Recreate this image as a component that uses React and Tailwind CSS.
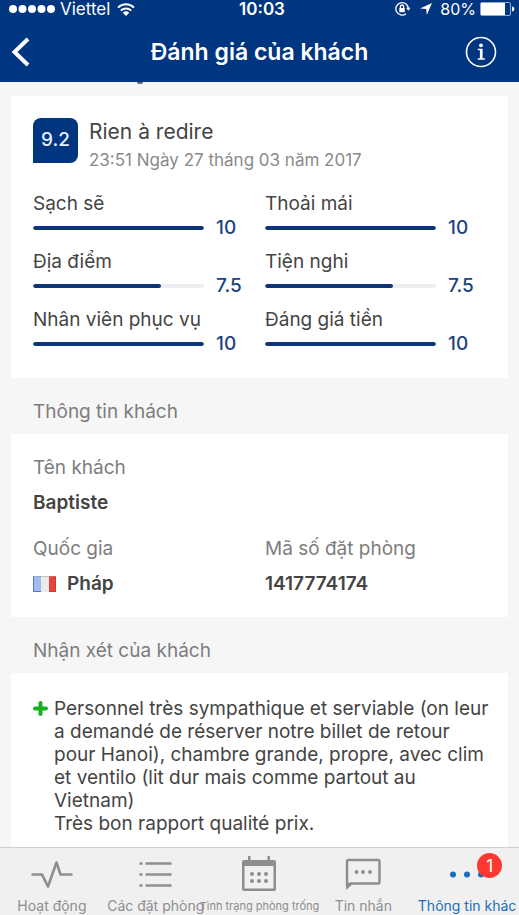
import React from "react";

const scores = [
  { label: "Sạch sẽ", value: 10 },
  { label: "Thoải mái", value: 10 },
  { label: "Địa điểm", value: 7.5 },
  { label: "Tiện nghi", value: 7.5 },
  { label: "Nhân viên phục vụ", value: 10 },
  { label: "Đáng giá tiền", value: 10 },
];

function StatusBar() {
  return (
    <div className="flex h-[18px] items-center justify-between pl-[9px] pr-1 text-[17px] leading-[18px]">
      <div className="flex flex-1 items-center gap-[5px]">
        <svg width="46" height="10" viewBox="0 0 46 10" fill="currentColor" aria-hidden="true">
          <circle cx="4" cy="5" r="4" />
          <circle cx="13.5" cy="5" r="4" />
          <circle cx="23" cy="5" r="4" />
          <circle cx="32.500" cy="5" r="4" />
          <circle cx="42" cy="5" r="4" />
        </svg>
        <span>Viettel</span>
        <svg width="18" height="13" viewBox="0 0 18 13" fill="none" stroke="currentColor" strokeWidth="2" className="ml-0.5" aria-hidden="true">
          <path d="M1 4.600A11.500 11.500 0 0 1 17 4.600" />
          <path d="M3.800 7.600A7.400 7.400 0 0 1 14.200 7.600" />
          <path d="M9 13L5.800 9.700A4.500 4.500 0 0 1 12.200 9.700Z" fill="currentColor" stroke="none" />
        </svg>
      </div>
      <span className="font-semibold">10:03</span>
      <div className="flex flex-1 items-center justify-end">
        <svg width="16" height="16" viewBox="0 0 16 16" fill="none" stroke="currentColor" strokeWidth="1.300" aria-hidden="true">
          <path d="M13.300 8A6.200 6.200 0 1 0 11 12.700" />
          <path d="M11 6.800h4.600l-2.300 3z" fill="currentColor" stroke="none" />
          <rect x="4.300" y="7" width="5.400" height="4.200" fill="currentColor" stroke="none" />
          <path d="M5.400 7V5.600a1.600 1.600 0 0 1 3.200 0V7" />
        </svg>
        <svg width="12" height="12" viewBox="0 0 12 12" fill="currentColor" className="ml-[9px] mr-2" aria-hidden="true">
          <path d="M12 0L6.800 12L6.200 6L0 5.600Z" />
        </svg>
        <span className="text-base leading-[18px]">80%</span>
        <svg width="35" height="14" viewBox="0 0 35 14" className="ml-1" aria-hidden="true">
          <rect x="0.500" y="0.500" width="30" height="13" rx="1.500" fill="none" stroke="#8fa8d0" />
          <rect x="1" y="1" width="24" height="12" fill="currentColor" />
          <path d="M32 4.500a2.500 2.500 0 0 1 0 5z" fill="currentColor" />
        </svg>
      </div>
    </div>
  );
}

function Header() {
  return (
    <header className="h-[82px] shrink-0 bg-[#003580] text-white">
      <StatusBar />
      <div className="flex h-16 items-center justify-between px-[11px] pt-1">
        <button type="button" aria-label="Quay lại" className="flex h-12 w-12 items-center">
          <svg width="20" height="30" viewBox="0 0 20 30" fill="none" stroke="currentColor" strokeWidth="4">
            <path d="M17 2L3.500 15L17 28" />
          </svg>
        </button>
        <h1 className="text-[23px] font-semibold leading-7">Đánh giá của khách</h1>
        <button type="button" aria-label="Thông tin" className="flex h-12 w-12 items-center justify-end pr-[11px]">
          <svg width="32" height="32" viewBox="0 0 32 32" fill="none" stroke="currentColor" className="shrink-0">
            <circle cx="16" cy="16" r="14.500" strokeWidth="1.600" />
            <circle cx="16" cy="9.300" r="1.900" fill="currentColor" stroke="none" />
            <path d="M12.800 13.500H16.500V23M12.800 23H19.800" strokeWidth="1.400" />
            <path d="M16.200 13V23" strokeWidth="2.600" />
          </svg>
        </button>
      </div>
    </header>
  );
}

function Score({ label, value }) {
  return (
    <div>
      <div className="text-[19px] leading-6 text-[#444]">{label}</div>
      <div className="flex h-6 items-center gap-3">
        <div role="meter" aria-label={label} aria-valuenow={value} aria-valuemin={0} aria-valuemax={10} className="h-1 flex-1 overflow-hidden rounded-full bg-[#ebedf0]">
          <div className="h-full rounded-full bg-[#0c3578]" style={{ width: `${value * 10}%` }} />
        </div>
        <span className="w-[49px] text-[19px] font-medium leading-6 text-[#1d4384]">{value}</span>
      </div>
    </div>
  );
}

function SectionTitle({ children }) {
  return <h2 className="flex h-14 items-center px-[22px] pt-3 text-[19px] leading-6 text-[#7d7d7d]">{children}</h2>;
}

function Flag() {
  return (
    <svg width="23" height="16" viewBox="0 0 23 16" aria-hidden="true">
      <rect width="8" height="16" fill="#a3baf0" />
      <rect x="8" width="8" height="16" fill="#ececec" />
      <rect x="16" width="7" height="16" fill="#ee4238" />
      <path d="M0.500 0V15.500H8" fill="none" stroke="#5275cf" />
      <path d="M16 15.500H22.500V0" fill="none" stroke="#cb3939" />
      <path d="M0 0.500H23" stroke="#999999" strokeOpacity="0.500" />
    </svg>
  );
}

function PulseIcon() {
  return (
    <svg width="42" height="28" viewBox="0 0 42 28" fill="none" stroke="currentColor" strokeWidth="2.600" strokeLinejoin="round">
      <path d="M0.500 14.500H11L17 26.500L25.500 2.500L29.500 14.500H41.500" />
    </svg>
  );
}

function ListIcon() {
  return (
    <svg width="33" height="28" viewBox="0 0 33 28" fill="none" stroke="currentColor" strokeWidth="2.600">
      <path d="M0.500 3.500h3M6.500 3.500h26M0.500 14.500h3M6.500 14.500h26M0.500 25.500h3M6.500 25.500h26" />
    </svg>
  );
}

function CalendarIcon() {
  return (
    <svg width="36" height="36" viewBox="0 0 36 36" fill="currentColor">
      <path d="M7 0h2.500v6H7zM26.500 0H29v6h-2.500z" />
      <path fillRule="evenodd" d="M3 4H33Q35 4 35 6V33Q35 35 33 35H3Q1 35 1 33V6Q1 4 3 4ZM3.500 10V32.500H32.500V10Z" />
      <circle cx="11" cy="18" r="2" />
      <circle cx="18" cy="18" r="2" />
      <circle cx="25" cy="18" r="2" />
      <circle cx="11" cy="25" r="2" />
      <circle cx="18" cy="25" r="2" />
      <circle cx="25" cy="25" r="2" />
    </svg>
  );
}

function ChatIcon() {
  return (
    <svg width="36" height="32" viewBox="0 0 36 32" fill="none" stroke="currentColor" strokeWidth="2.400">
      <path d="M2 28V3.500Q2 2 3.500 2H33Q34.500 2 34.500 3.500V24Q34.500 25.500 33 25.500H5" />
      <path d="M1 24V32L8.500 25.500Z" fill="currentColor" stroke="none" />
      <g fill="currentColor" stroke="none">
        <circle cx="11.500" cy="14" r="1.900" />
        <circle cx="18" cy="14" r="1.900" />
        <circle cx="25" cy="14" r="1.900" />
      </g>
    </svg>
  );
}

function MoreIcon() {
  return (
    <svg width="34" height="28" viewBox="0 0 34 28" fill="currentColor">
      <circle cx="3" cy="14.500" r="3" />
      <circle cx="17" cy="14.500" r="3" />
      <circle cx="31" cy="14.500" r="3" />
    </svg>
  );
}

const tabs = [
  { label: "Hoạt động", Icon: PulseIcon },
  { label: "Các đặt phòng", Icon: ListIcon },
  { label: "Tình trạng phòng trống", Icon: CalendarIcon, size: "text-[11px]" },
  { label: "Tin nhắn", Icon: ChatIcon },
  { label: "Thông tin khác", Icon: MoreIcon, badge: 1, active: true },
];

function TabBar() {
  return (
    <nav className="grid h-[68px] shrink-0 grid-cols-5 border-t border-[#cfcfcf] bg-[#f0f0f0]">
      {tabs.map(({ label, Icon, size, badge, active }) => (
        <button key={label} type="button" className={`flex min-w-0 flex-col items-center pt-2 ${active ? "text-[#1b6fb8]" : "text-[#8e8e8e]"}`}>
          <span className="relative flex h-9 items-center">
            <Icon />
            {badge && (
              <span className="absolute -right-[18px] -top-[3px] flex h-[25px] w-[25px] items-center justify-center rounded-full bg-[#fc3830] text-[17px] leading-5 text-white">
                {badge}
              </span>
            )}
          </span>
          <span className={`mt-1 whitespace-nowrap leading-5 ${size || "text-[14px]"}`}>{label}</span>
        </button>
      ))}
    </nav>
  );
}

export default function App() {
  return (
    <div className="flex h-screen flex-col overflow-hidden bg-[#f6f6f6] font-['Inter','Noto_Sans',sans-serif]">
      <Header />
      <main className="min-h-0 flex-1 overflow-hidden px-[11px]">
        <div className="h-[14px] pl-[126px]">
          <div className="h-0.5 w-1.5 rounded-b-full bg-[#5b6470]" />
        </div>
        <section className="bg-white pb-[22px] pl-[22px] pr-[11px] pt-[22px]">
          <div className="flex h-[74px] items-start gap-[11px]">
            <div className="flex h-[45px] w-[45px] items-center justify-center rounded-lg rounded-bl-none bg-[#003580] text-[19px] font-medium text-[#e6eeff]">9.2</div>
            <div>
              <h2 className="text-[21px] leading-7 text-[#444]">Rien à redire</h2>
              <p className="mt-0.5 text-[17px] leading-6 text-[#8a8a8a]">23:51 Ngày 27 tháng 03 năm 2017</p>
            </div>
          </div>
          <div className="grid grid-cols-2 gap-y-[10px]">
            {scores.map((s) => (
              <Score key={s.label} {...s} />
            ))}
          </div>
        </section>

        <SectionTitle>Thông tin khách</SectionTitle>
        <section className="bg-white pb-[21px] pl-[22px] pr-[11px] pt-[22px] text-[19px] leading-6 text-[#444]">
          <dl className="grid grid-cols-2 gap-y-[22px]">
            <div className="col-span-2">
              <dt className="text-[#7d7d7d]">Tên khách</dt>
              <dd className="mt-[11px] font-semibold">Baptiste</dd>
            </div>
            <div>
              <dt className="text-[#7d7d7d]">Quốc gia</dt>
              <dd className="mt-[11px] flex items-center gap-[11px] font-semibold">
                <Flag />
                Pháp
              </dd>
            </div>
            <div>
              <dt className="text-[#7d7d7d]">Mã số đặt phòng</dt>
              <dd className="mt-[11px] font-semibold">1417774174</dd>
            </div>
          </dl>
        </section>

        <SectionTitle>Nhận xét của khách</SectionTitle>
        <section className="flex gap-[6px] bg-white pb-10 pl-[22px] pr-[11px] pt-6 text-[19px] leading-[23px] text-[#444]">
          <svg width="15" height="15" viewBox="0 0 15 15" className="mt-1 shrink-0" stroke="#16b01e" strokeWidth="4" strokeLinecap="round" aria-hidden="true">
            <path d="M7.500 2V13M2 7.500H13" />
          </svg>
          <p>
            Personnel très sympathique et serviable (on leur
            <br />
            a demandé de réserver notre billet de retour
            <br />
            pour Hanoi), chambre grande, propre, avec clim
            <br />
            et ventilo (lit dur mais comme partout au
            <br />
            Vietnam)
            <br />
            Très bon rapport qualité prix.
          </p>
        </section>
      </main>
      <TabBar />
    </div>
  );
}
